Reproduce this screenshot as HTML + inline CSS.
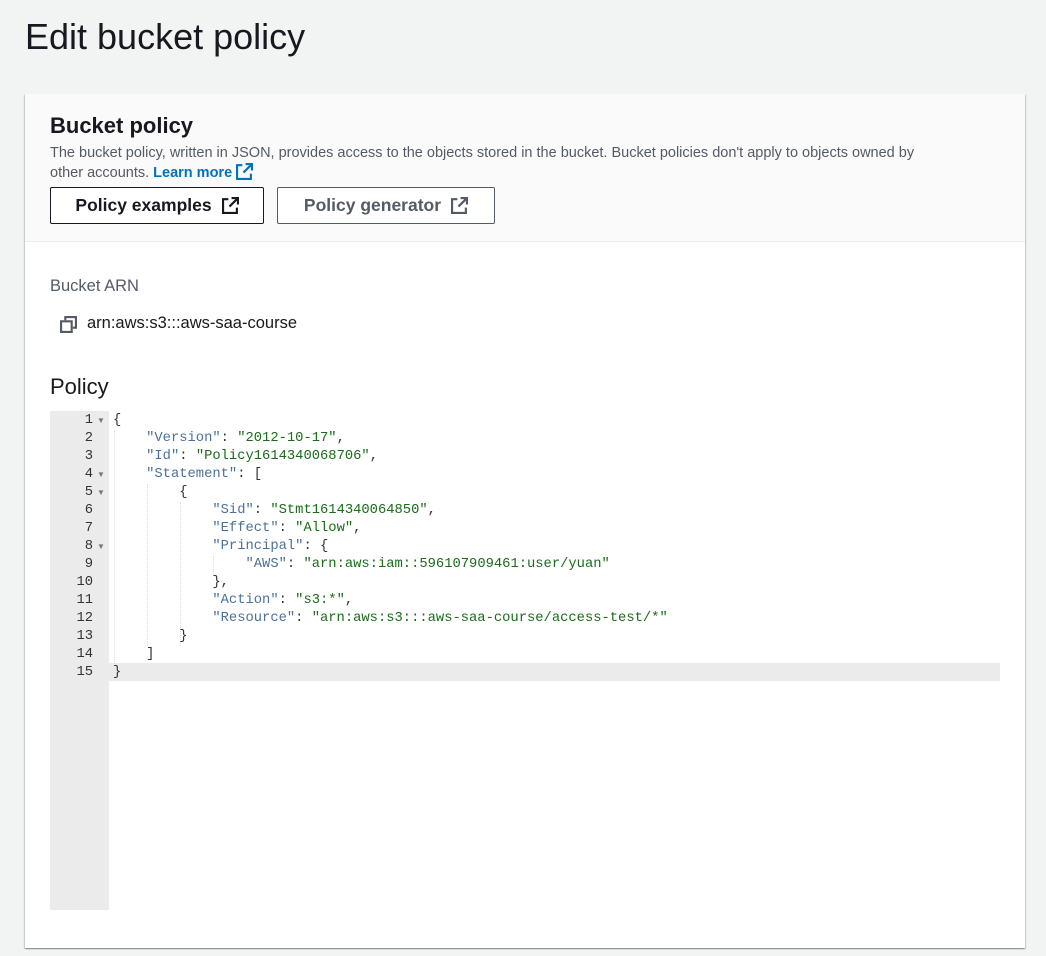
<!DOCTYPE html>
<html><head><meta charset="utf-8"><style>
body{margin:0;background:#f2f3f3;font-family:"Liberation Sans",sans-serif;color:#16191f;width:1046px;height:956px;overflow:hidden;position:relative}
h1{position:absolute;left:25px;top:15px;margin:0;font-weight:400;font-size:36px;line-height:44px;color:#16191f}
.card{position:absolute;left:25px;top:94px;width:1000px;height:854px;background:#fff;box-shadow:0 1px 1px 0 rgba(0,28,36,.3),1px 1px 1px 0 rgba(0,28,36,.15),-1px 1px 1px 0 rgba(0,28,36,.15)}
.hdr{position:absolute;left:0;top:0;width:1000px;height:147px;background:#fafafa;border-bottom:1px solid #eaeded}
.hdr h2{position:absolute;left:25px;top:19px;margin:0;font-size:22px;font-weight:700;line-height:26px}
.desc{position:absolute;left:25px;top:50px;width:900px;font-size:14.5px;line-height:19px;color:#545b64}
.desc b{color:#0073bb}
.btn{position:absolute;top:93px;height:37px;box-sizing:border-box;border:1px solid #16191f;border-radius:2px;background:#fff;font-weight:700;font-size:17.5px;line-height:35px;text-align:center}
.btn svg{vertical-align:-3px;margin-left:10px}
.lbl{position:absolute;left:25px;top:183px;font-size:16.5px;color:#545b64}
.arn{position:absolute;left:62px;top:220px;font-size:16.5px;color:#16191f}
.pol{position:absolute;left:25px;top:280px;font-size:22px;color:#16191f}
.ed{position:absolute;left:25px;top:317px;width:950px;height:499px;background:#fff}
.gut{position:absolute;left:0;top:0;width:59px;height:499px;background:#ebebeb}
.code{position:absolute;left:0;top:1px;font-family:"Liberation Mono",monospace;font-size:13.8px;line-height:18px;white-space:pre}
.ln{position:absolute;left:0;width:43px;text-align:right;color:#333;font-family:"Liberation Mono",monospace;font-size:13.8px;line-height:18px}
.ar{position:absolute;left:47px;color:#777;font-size:8px;line-height:18px}
.k{color:#4c7199}.s{color:#1a6b1a}.p{color:#333}
.act{position:absolute;left:59px;top:252px;width:891px;height:18px;background:#ebebeb}
.g{position:absolute;border-left:1px dotted #ddd;width:0}
</style></head><body>
<h1>Edit bucket policy</h1>
<div class="card">
<div class="hdr">
<h2>Bucket policy</h2>
<div class="desc">The bucket policy, written in JSON, provides access to the objects stored in the bucket. Bucket policies don't apply to objects owned by other accounts. <b>Learn more</b> <svg width="17" height="17" viewBox="0 0 16 16" style="vertical-align:-3px" fill="none" stroke="#0073bb" stroke-width="2"><path d="M9 1h6v6M15 1L7 9M6 2H1v13h13v-5"/></svg></div>
<div class="btn" style="left:25px;width:214px">Policy examples<svg width="17" height="17" viewBox="0 0 16 16" fill="none" stroke="#16191f" stroke-width="2"><path d="M9 1h6v6M15 1L7 9M6 2H1v13h13v-5"/></svg></div>
<div class="btn" style="left:252px;width:218px;border-color:#545b64;color:#545b64">Policy generator<svg width="17" height="17" viewBox="0 0 16 16" fill="none" stroke="#545b64" stroke-width="2"><path d="M9 1h6v6M15 1L7 9M6 2H1v13h13v-5"/></svg></div>
</div>
<div class="lbl">Bucket ARN</div>
<svg style="position:absolute;left:35px;top:222px" width="17" height="17" viewBox="0 0 16 16" fill="none" stroke="#545b64" stroke-width="2"><rect x="1" y="5" width="10" height="10"/><path d="M5 4V1h10v10h-3"/></svg>
<div class="arn">arn:aws:s3:::aws-saa-course</div>
<div class="pol">Policy</div>
<div class="ed">
<div class="gut"></div>
<div class="act"></div>
<div class="ln" style="top:1px">1<br>2<br>3<br>4<br>5<br>6<br>7<br>8<br>9<br>10<br>11<br>12<br>13<br>14<br>15</div>
<div class="ar" style="top:1px">▼</div><div class="ar" style="top:55px">▼</div><div class="ar" style="top:73px">▼</div><div class="ar" style="top:127px">▼</div>
<div class="g" style="left:64px;top:19px;height:234px"></div>
<div class="g" style="left:97px;top:73px;height:162px"></div>
<div class="g" style="left:130px;top:91px;height:144px"></div>
<div class="g" style="left:163px;top:145px;height:18px"></div>
<div class="code" style="left:63px"><span class="p">{</span>
    <span class="k">"Version"</span><span class="p">: </span><span class="s">"2012-10-17"</span><span class="p">,</span>
    <span class="k">"Id"</span><span class="p">: </span><span class="s">"Policy1614340068706"</span><span class="p">,</span>
    <span class="k">"Statement"</span><span class="p">: [</span>
        <span class="p">{</span>
            <span class="k">"Sid"</span><span class="p">: </span><span class="s">"Stmt1614340064850"</span><span class="p">,</span>
            <span class="k">"Effect"</span><span class="p">: </span><span class="s">"Allow"</span><span class="p">,</span>
            <span class="k">"Principal"</span><span class="p">: {</span>
                <span class="k">"AWS"</span><span class="p">: </span><span class="s">"arn:aws:iam::596107909461:user/yuan"</span>
            <span class="p">},</span>
            <span class="k">"Action"</span><span class="p">: </span><span class="s">"s3:*"</span><span class="p">,</span>
            <span class="k">"Resource"</span><span class="p">: </span><span class="s">"arn:aws:s3:::aws-saa-course/access-test/*"</span>
        <span class="p">}</span>
    <span class="p">]</span>
<span class="p">}</span></div>
</div>
</div>
</body></html>
